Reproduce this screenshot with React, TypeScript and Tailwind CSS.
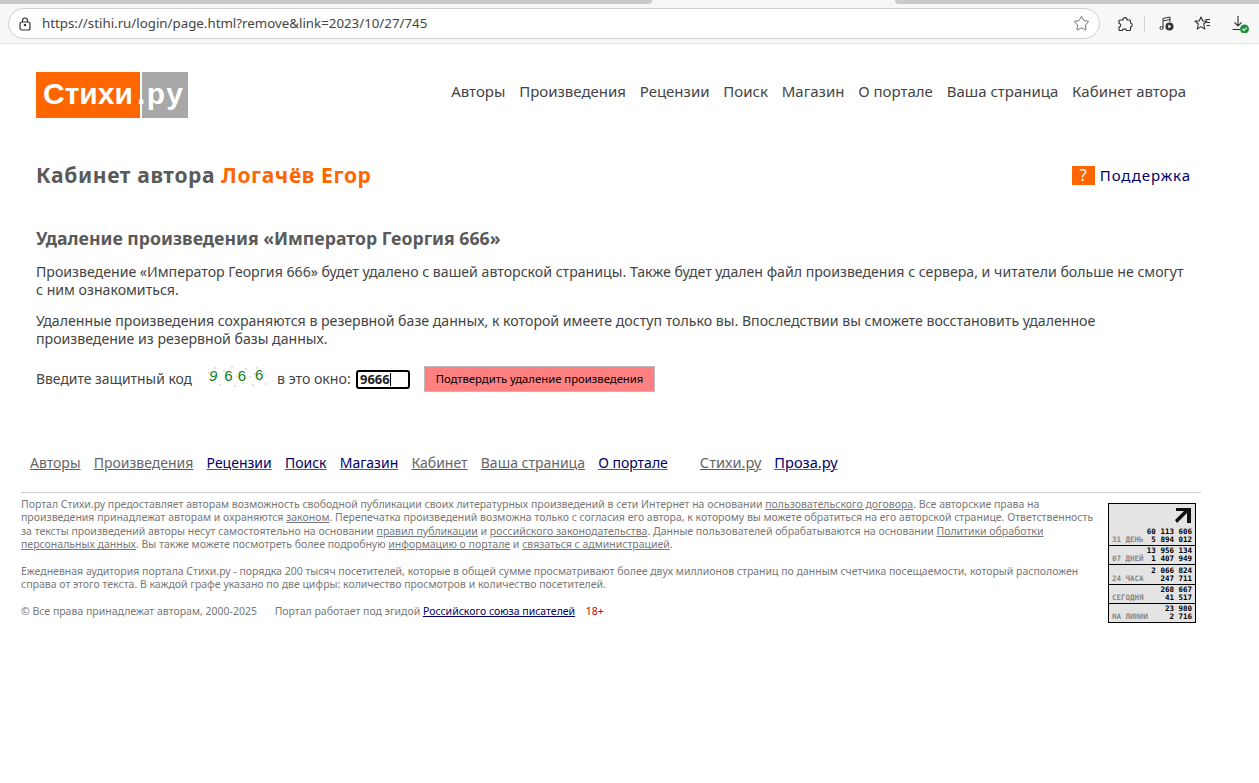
import { Star } from 'lucide-react';

const sans = { fontFamily: '"Noto Sans", sans-serif' };

const topNav = ['Авторы', 'Произведения', 'Рецензии', 'Поиск', 'Магазин', 'О портале', 'Ваша страница', 'Кабинет автора'];

const bottomNav = [
  { label: 'Авторы', dark: false },
  { label: 'Произведения', dark: false },
  { label: 'Рецензии', dark: true },
  { label: 'Поиск', dark: true },
  { label: 'Магазин', dark: true },
  { label: 'Кабинет', dark: false },
  { label: 'Ваша страница', dark: false },
  { label: 'О портале', dark: true },
];

const counter = [
  { label: '31 ДЕНЬ', views: '60 113 606', visitors: '5 894 012' },
  { label: '07 ДНЕЙ', views: '13 956 134', visitors: '1 407 949' },
  { label: '24 ЧАСА', views: '2 066 824', visitors: '247 711' },
  { label: 'СЕГОДНЯ', views: '268 667', visitors: '41 517' },
  { label: 'НА ЛИНИИ', views: '23 980', visitors: '2 716' },
];

const noise = [
  [3, 8], [6, 16], [9, 3], [14, 20], [18, 6], [22, 14], [26, 2], [29, 21], [33, 7], [37, 18],
  [40, 4], [44, 12], [47, 20], [51, 3], [54, 15], [58, 8], [60, 19], [12, 12], [31, 12], [49, 9],
];

function BrowserBar() {
  return (
    <div className="border-b border-[#e6e6e6]">
      {/* Tab strip */}
      <div className="h-[4px] bg-[#f7f7f7] flex justify-between">
        <div className="w-[652px] bg-[#cacaca] rounded-br-[5px]" />
        <div className="w-[364px] bg-[#cacaca] rounded-bl-[5px]" />
      </div>

      <div className="h-[39px] bg-[#f7f7f7] flex items-center pl-[8px]">
        <div className="w-[1092px] h-[31px] rounded-full bg-white border border-[#cfcfcf] flex items-center pl-[10px] pr-[9px]">
          <svg width="12" height="14" viewBox="0 0 12 14" fill="none" stroke="#333" strokeWidth="1.2">
            <path d="M3.5 5V3.5a2.5 2.5 0 0 1 5 0V5" />
            <rect x="1" y="5" width="10" height="8" rx="2" />
            <circle cx="6" cy="8" r="0.7" fill="#333" />
          </svg>
          <span className="ml-[11px] text-[13.3px] text-[#444] flex-1 pt-[1px]" style={sans}>
            https://stihi.ru/login/page.html?remove&amp;link=2023/10/27/745
          </span>
          <Star className="w-[17px] h-[17px] text-[#555]" strokeWidth={1.2} />
        </div>

        {/* Extensions */}
        <svg className="ml-[17px]" width="16" height="16" viewBox="0 0 16 16" fill="none" stroke="#333" strokeWidth="1.2" strokeLinejoin="round">
          <path d="M6 3.5C6 1 10 1 10 3.5V4H12.5a1 1 0 0 1 1 1V7C15.7 7 15.7 11 13.5 11V13.5a1 1 0 0 1-1 1H9.5C9.5 12.3 5.5 12.3 5.5 14.5H3a1 1 0 0 1-1-1V11C4.2 11 4.2 7.5 2 7.5V5a1 1 0 0 1 1-1H6Z" />
        </svg>
        <div className="ml-[11px] w-px h-[16px] bg-[#d5d5d5]" />

        {/* Media */}
        <svg className="ml-[14px]" width="15" height="15" viewBox="0 0 15 15" fill="none" stroke="#333" strokeWidth="1">
          <circle cx="2.5" cy="12" r="1.5" />
          <path d="M4 12V2.5L11 1V6" />
          <path d="M4 5L11 3.5" />
          <circle cx="10.5" cy="10.5" r="4" fill="#333" stroke="none" />
          <path d="M9.3 8.6V12.4L12.3 10.5Z" fill="#fff" stroke="none" />
        </svg>

        {/* Favorites */}
        <svg className="ml-[20px]" width="17" height="15" viewBox="0 0 17 15" fill="none" stroke="#333" strokeWidth="1.1" strokeLinejoin="round">
          <path d="M7 1L8.8 5H13L9.7 8L10.8 13L7 10.6L3.2 13L4.3 8L1 5H5.2Z" />
          <path d="M11.5 3.5H16M12.5 6.5H16M12.5 9.5H16" />
        </svg>

        {/* Downloads */}
        <svg className="ml-[21px]" width="18" height="18" viewBox="0 0 18 18" fill="none" stroke="#333" strokeWidth="1.1">
          <path d="M6 1V11M2.5 7.5L6 11L9.5 7.5" />
          <path d="M0.5 14.5H8" />
          <circle cx="12.5" cy="14" r="4.5" fill="#1f8f3a" stroke="none" />
          <path d="M10.5 14L12 15.5L14.6 12.7" stroke="#fff" />
        </svg>
      </div>
    </div>
  );
}

function Captcha() {
  return (
    <div className="ml-[14px] -mt-[6px] relative w-[63px] h-[24px] flex text-[15px] leading-[24px] text-[#117f17]" style={{ fontFamily: '"Liberation Sans", sans-serif' }}>
      <svg className="absolute left-0 top-0" width="63" height="24" viewBox="0 0 63 24">
        {noise.map(([x, y]) => (
          <rect key={`${x}-${y}`} x={x} y={y} width="2" height="2" fill="#dbe6ea" />
        ))}
      </svg>
      <span className="relative ml-[4px] italic">9</span>
      <span className="relative ml-[7px]">6</span>
      <span className="relative ml-[5px]">6</span>
      <span className="relative ml-[9px] -top-[1px]">6</span>
    </div>
  );
}

function Counter() {
  return (
    <div className="w-[88px] h-[120px] mt-[10px] mr-[5px] shrink-0 border border-black bg-[#e4e4e4] flex flex-col" style={{ fontFamily: '"DejaVu Sans Mono", monospace' }}>
      <div className="h-[23px] flex justify-end pr-[3px] pt-[3px]">
        <svg width="18" height="17" viewBox="0 0 18 17">
          <path d="M2 1H17V16H13V6L3 16L1 13L10 4H2Z" fill="#111" />
        </svg>
      </div>
      {counter.map((row, i) => (
        <div key={row.label} className={`flex-1 flex flex-col justify-end pr-[3px] text-right text-[7.5px] leading-[8px] font-bold text-black pb-[1px] ${i > 0 ? 'border-t border-black' : ''}`}>
          <div>{row.views}</div>
          <div className="flex justify-between pl-[3px]">
            <span className="text-[#888]">{row.label}</span>
            <span>{row.visitors}</span>
          </div>
        </div>
      ))}
    </div>
  );
}

export default function App() {
  return (
    <div className="min-h-[783px] bg-white text-[#5a5a5a]" style={sans}>
      <BrowserBar />

      {/* Header */}
      <div className="pl-[36px] pr-[73px] pt-[28px] flex justify-between">
        <div className="flex h-[46px] text-white font-bold text-[30px] leading-[44px]" style={{ fontFamily: '"Liberation Sans", sans-serif' }}>
          <div className="w-[104px] bg-[#ff6600] pl-[7px]">Стихи</div>
          <div className="w-[2px]" />
          <div className="w-[46px] bg-[#a8a8a8] relative">
            <span className="absolute -left-[5px] top-0 tracking-[1.5px]">.ру</span>
          </div>
        </div>
        <nav className="flex gap-[13.8px] text-[15px] pt-[9px] leading-[20px]">
          {topNav.map((item) => (
            <a key={item} className="text-[#444]">{item}</a>
          ))}
        </nav>
      </div>

      {/* Title */}
      <div className="pl-[36px] pr-[68px] mt-[40px] flex items-center justify-between">
        <h1 className="text-[21px] leading-[30px] pt-[2px] font-bold tracking-[0.65px]">
          Кабинет автора <span className="text-[#ff6600]">Логачёв Егор</span>
        </h1>
        <div className="flex items-center gap-[5px] mt-[2px]">
          <span className="w-[23px] h-[19px] bg-[#ff6600] text-white text-[16px] leading-[19px] text-center">?</span>
          <a className="text-[15px] text-[#000066] tracking-[0.95px]">Поддержка</a>
        </div>
      </div>

      {/* Body */}
      <div className="pl-[36px] pr-[69px] mt-[36px]">
        <h2 className="text-[17.7px] font-bold leading-[24px]">Удаление произведения «Император Георгия 666»</h2>
        <p className="mt-[13px] text-[14.13px] leading-[18px] text-[#444]">
          Произведение «Император Георгия 666» будет удалено с вашей авторской страницы. Также будет удален файл произведения с сервера, и читатели больше не смогут с ним ознакомиться.
        </p>
        <p className="mt-[13px] text-[14.13px] leading-[18px] text-[#444]">
          Удаленные произведения сохраняются в резервной базе данных, к которой имеете доступ только вы. Впоследствии вы сможете восстановить удаленное произведение из резервной базы данных.
        </p>
        <div className="mt-[18px] flex items-center text-[14.13px] text-[#444]">
          <span className="w-[155px] whitespace-nowrap text-[13.9px]">Введите защитный код</span>
          <Captcha />
          <span className="ml-[9px] w-[75px] whitespace-nowrap">в это окно:</span>
          <div className="ml-[4px] w-[54px] h-[19px] border-2 border-black rounded-[3px] bg-white text-[13px] font-bold text-[#222] leading-[15px] pl-[2px] flex items-center">
            9666<span className="w-px h-[13px] bg-black" />
          </div>
          <button className="ml-[14px] w-[231px] h-[26px] bg-[#ff8080] border border-[#bbb] text-[11.3px] text-black">Подтвердить удаление произведения</button>
        </div>
      </div>

      {/* Bottom navigation */}
      <nav className="pl-[30px] mt-[60px] flex text-[14px] underline">
        <div className="flex gap-[13.2px]">
          {bottomNav.map((item) => (
            <a key={item.label} className={item.dark ? 'text-[#000066]' : 'text-[#666]'}>{item.label}</a>
          ))}
        </div>
        <div className="ml-[32px] flex gap-[13px] text-[14.6px]">
          <a className="text-[#666]">Стихи.ру</a>
          <a className="text-[#000066]">Проза.ру</a>
        </div>
      </nav>

      {/* Footer */}
      <div className="ml-[21px] mr-[58px] mt-[18px] border-t border-[#ccc] flex justify-between text-[#777] text-[10.5px] leading-[13.5px]">
        <div className="w-[1075px] pt-[5px]">
          <p>
            Портал Стихи.ру предоставляет авторам возможность свободной публикации своих литературных произведений в сети Интернет на основании <a className="underline">пользовательского договора</a>. Все авторские права на произведения принадлежат авторам и охраняются <a className="underline">законом</a>. Перепечатка произведений возможна только с согласия его автора, к которому вы можете обратиться на его авторской странице. Ответственность за тексты произведений авторы несут самостоятельно на основании <a className="underline">правил публикации</a> и <a className="underline">российского законодательства</a>. Данные пользователей обрабатываются на основании <a className="underline">Политики обработки персональных данных</a>. Вы также можете посмотреть более подробную <a className="underline">информацию о портале</a> и <a className="underline">связаться с администрацией</a>.
          </p>
          <p className="mt-[13px]">
            Ежедневная аудитория портала Стихи.ру - порядка 200 тысяч посетителей, которые в общей сумме просматривают более двух миллионов страниц по данным счетчика посещаемости, который расположен справа от этого текста. В каждой графе указано по две цифры: количество просмотров и количество посетителей.
          </p>
          <p className="mt-[13px]">
            © Все права принадлежат авторам, 2000-2025 <span className="ml-[15px]">Портал работает под эгидой</span> <a className="underline text-[#000066]">Российского союза писателей</a> <span className="ml-[8px] text-[#cc0000]">18+</span>
          </p>
        </div>
        <Counter />
      </div>
    </div>
  );
}
